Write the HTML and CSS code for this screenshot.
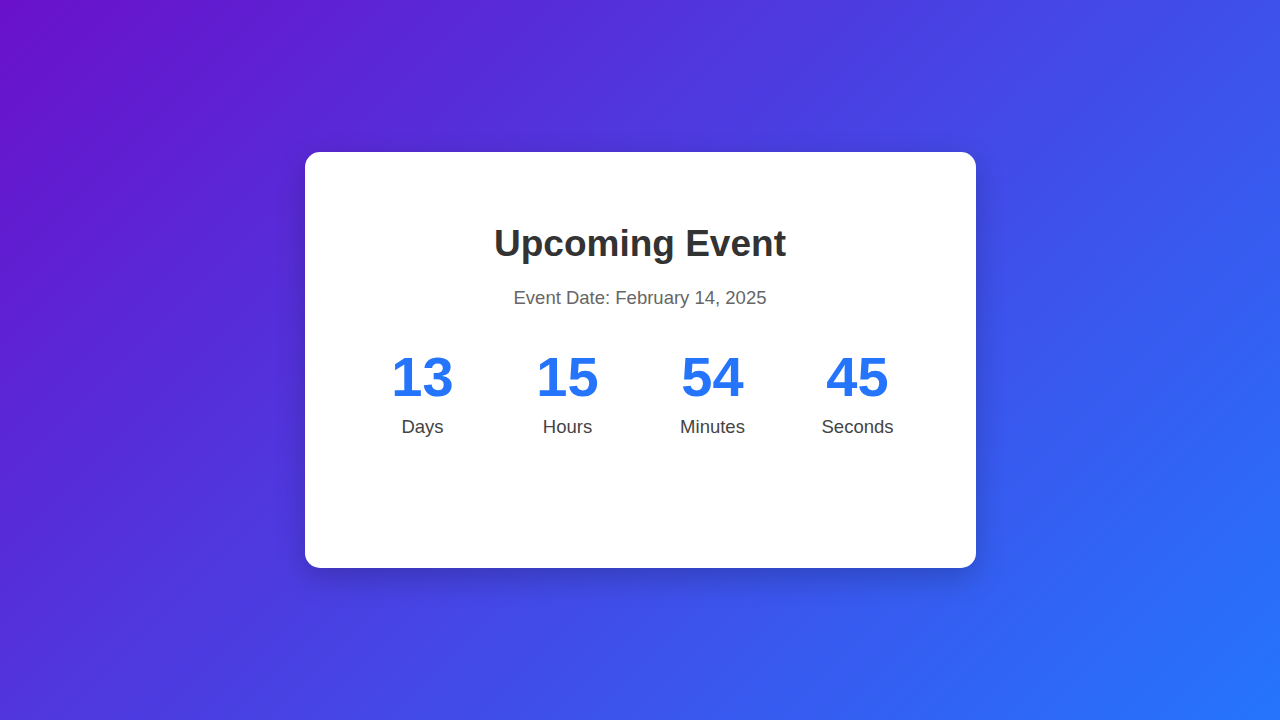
FILE: index.html
```html
<!DOCTYPE html>
<html lang="en">
<head>
    <meta charset="UTF-8">
    <meta name="viewport" content="width=device-width, initial-scale=1.0">
    <title>Countdown</title>
    <link rel="stylesheet" href="styles.css">
</head>
<body>
    <div class="countdown-card">
        <h1>Upcoming Event</h1>
        <p class="event-date">Event Date: February 14, 2025</p>
        <div class="countdown">
            <div class="time-unit">
                <span class="number" id="days">13</span>
                <span class="label">Days</span>
            </div>
            <div class="time-unit">
                <span class="number" id="hours">15</span>
                <span class="label">Hours</span>
            </div>
            <div class="time-unit">
                <span class="number" id="minutes">54</span>
                <span class="label">Minutes</span>
            </div>
            <div class="time-unit">
                <span class="number" id="seconds">45</span>
                <span class="label">Seconds</span>
            </div>
        </div>
    </div>
</body>
</html>
```

FILE: styles.css
```css
* {
    box-sizing: border-box;
}
body {
    margin: 0;
    height: 100vh;
    display: flex;
    align-items: center;
    justify-content: center;
    background: linear-gradient(135deg, #6a11cb 0%, #2575fc 100%);
    font-family: "Liberation Sans", Arial, sans-serif;
}
.countdown-card {
    width: 671px;
    height: 416px;
    padding: 71px 40px 0;
    background-color: #fff;
    border-radius: 15px;
    box-shadow: 0 10px 30px rgba(0, 0, 0, 0.2);
    text-align: center;
}
h1 {
    margin: 0 0 22px;
    font-size: 37px;
    line-height: 42px;
    color: #333;
}
.event-date {
    margin: 0 0 37px;
    font-size: 18.5px;
    line-height: 21px;
    color: #666;
}
.countdown {
    display: grid;
    grid-template-columns: repeat(4, 145px);
    justify-content: center;
}
.time-unit {
    display: flex;
    flex-direction: column;
    align-items: center;
}
.number {
    font-size: 56px;
    font-weight: bold;
    line-height: 64px;
    color: #2575fc;
}
.label {
    margin-top: 7px;
    font-size: 18.5px;
    line-height: 21px;
    color: #444;
}
```
